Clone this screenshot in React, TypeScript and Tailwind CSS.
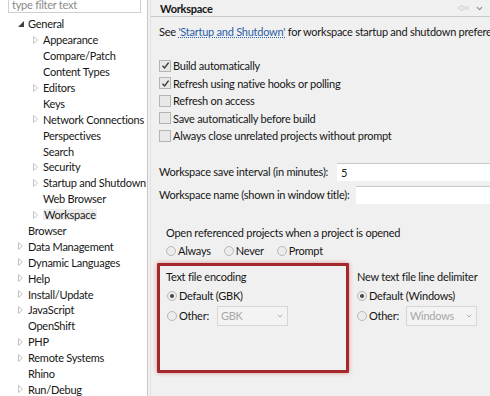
import { ChevronDown } from "lucide-react";

const tree: { label: string; depth: number; arrow?: "open" | "closed"; selected?: boolean }[] = [
  { label: "General", depth: 0, arrow: "open" },
  { label: "Appearance", depth: 1, arrow: "closed" },
  { label: "Compare/Patch", depth: 1 },
  { label: "Content Types", depth: 1 },
  { label: "Editors", depth: 1, arrow: "closed" },
  { label: "Keys", depth: 1 },
  { label: "Network Connections", depth: 1, arrow: "closed" },
  { label: "Perspectives", depth: 1 },
  { label: "Search", depth: 1 },
  { label: "Security", depth: 1, arrow: "closed" },
  { label: "Startup and Shutdown", depth: 1, arrow: "closed" },
  { label: "Web Browser", depth: 1 },
  { label: "Workspace", depth: 1, arrow: "closed", selected: true },
  { label: "Browser", depth: 0 },
  { label: "Data Management", depth: 0, arrow: "closed" },
  { label: "Dynamic Languages", depth: 0, arrow: "closed" },
  { label: "Help", depth: 0, arrow: "closed" },
  { label: "Install/Update", depth: 0, arrow: "closed" },
  { label: "JavaScript", depth: 0, arrow: "closed" },
  { label: "OpenShift", depth: 0 },
  { label: "PHP", depth: 0, arrow: "closed" },
  { label: "Remote Systems", depth: 0, arrow: "closed" },
  { label: "Rhino", depth: 0 },
  { label: "Run/Debug", depth: 0, arrow: "closed" },
];

function Arrow({ kind }: { kind?: "open" | "closed" }) {
  if (!kind) return <span className="w-[15px] shrink-0" />;
  return (
    <span className="flex w-[15px] shrink-0 items-center justify-center">
      {kind === "open" ? (
        <svg width="6" height="6" viewBox="0 0 6 6">
          <path d="M6 0 L6 6 L0 6 Z" fill="#404040" />
        </svg>
      ) : (
        <svg width="5" height="8" viewBox="0 0 5 8">
          <path d="M0.5 0.5 L4.5 4 L0.5 7.5 Z" fill="none" stroke="#c4c4c4" strokeWidth="1" />
        </svg>
      )}
    </span>
  );
}

function Checkbox({ checked, label }: { checked?: boolean; label: string }) {
  return (
    <div className="flex h-[17.5px] items-center">
      <span className="flex h-[12px] w-[12px] items-center justify-center border border-[#b4b4b4] bg-[#e8e8e8]">
        {checked && (
          <svg width="9" height="9" viewBox="0 0 9 9">
            <path d="M1.5 4.8 L3.6 7 L7.6 1.6" fill="none" stroke="#3a3a3a" strokeWidth="1.4" />
          </svg>
        )}
      </span>
      <span className="ml-[2px]">{label}</span>
    </div>
  );
}

function Radio({ checked, label, className = "" }: { checked?: boolean; label: string; className?: string }) {
  return (
    <span className={"flex items-center " + className}>
      <span className="flex h-[10px] w-[10px] items-center justify-center rounded-full border border-[#b8b8b8] bg-[#ececec]">
        {checked && <span className="h-[4px] w-[4px] rounded-full bg-[#454545]" />}
      </span>
      <span className="ml-[2px]">{label}</span>
    </span>
  );
}

function Combo({ value }: { value: string }) {
  return (
    <span className="flex h-[20px] w-[71px] items-center justify-between border border-[#d6d6d6] bg-[#f3f3f3] px-[3px] text-[#a8a8a8]">
      <span>{value}</span>
      <ChevronDown size={8} strokeWidth={3} className="text-[#b0b0b0]" />
    </span>
  );
}

export default function App() {
  return (
    <div className="flex h-[396px] w-[490px] overflow-hidden bg-[#f0f0f0] font-['Lato','Noto_Sans',sans-serif] text-[11px] leading-none tracking-[-0.25px] text-[#161616]">
      {/* left: preference tree */}
      <div className="flex w-[148px] shrink-0 flex-col border-r border-[#c9c9c9] bg-white">
        <div className="mx-[8px] mt-[-8px] flex h-[21px] w-[133px] shrink-0 items-end border border-[#cfcfcf] px-[3px] pb-[2px] text-[#8a8a8a]">
          type filter text
        </div>
        <div className="mt-[3px] flex flex-col">
          {tree.map((t) => (
            <div
              key={t.label}
              className="flex h-[15.9px] shrink-0 items-center whitespace-nowrap"
              style={{ paddingLeft: 13 + t.depth * 15 }}
            >
              <Arrow kind={t.arrow} />
              <span className={t.selected ? "bg-[#ececec] px-[1px]" : ""}>{t.label}</span>
            </div>
          ))}
        </div>
      </div>

      {/* right: workspace page */}
      <div className="ml-[2px] flex min-w-0 flex-1 flex-col border-l border-[#e2e2e2]">
        <div className="flex h-[17px] shrink-0 items-center justify-between border-b border-[#c8c8c8] pl-[9px] pr-[6px]">
          <span className="font-bold">Workspace</span>
          <span className="flex items-center gap-[6px] text-[#c4c4c4]">
            <svg width="12" height="8" viewBox="0 0 12 8">
              <path d="M1 4 L5 1 L5 3 L11 3 L11 5 L5 5 L5 7 Z" fill="none" stroke="#cfcfcf" />
            </svg>
            <ChevronDown size={9} strokeWidth={3} className="text-[#8a8a8a]" />
          </span>
        </div>
        <div className="flex flex-col pl-[8px]">
          <div className="mt-[7px] flex h-[14px] items-center whitespace-nowrap">
            See&nbsp;
            <span className="text-[#2a5fa8] underline decoration-dotted">'Startup and Shutdown'</span>
            &nbsp;for workspace startup and shutdown preferences.
          </div>

          <div className="mt-[19px] flex flex-col">
            <Checkbox checked label="Build automatically" />
            <Checkbox checked label="Refresh using native hooks or polling" />
            <Checkbox label="Refresh on access" />
            <Checkbox label="Save automatically before build" />
            <Checkbox label="Always close unrelated projects without prompt" />
          </div>

          <div className="mt-[18px] flex h-[18px] items-center whitespace-nowrap">
            <span className="w-[178px] shrink-0">Workspace save interval (in minutes):</span>
            <span className="flex h-[18px] flex-1 items-center border-t border-[#c8c8c8] bg-white pl-[4px]">5</span>
          </div>
          <div className="mt-[5px] flex h-[18px] items-center whitespace-nowrap">
            <span className="w-[197px] shrink-0">Workspace name (shown in window title):</span>
            <span className="h-[18px] flex-1 border-t border-[#c8c8c8] bg-white" />
          </div>

          <div className="mt-[21px] pl-[7px]">
            <div className="flex h-[16px] items-center">Open referenced projects when a project is opened</div>
            <div className="mt-[1px] flex h-[18px] items-center">
              <Radio label="Always" />
              <Radio label="Never" className="ml-[13px]" />
              <Radio label="Prompt" className="ml-[13px]" />
            </div>
          </div>

          <div className="ml-[-2px] mt-[3px] flex">
            <div className="flex h-[110px] w-[192px] shrink-0 flex-col rounded-[1px] border-[3px] border-[#a3282c] pl-[6px] pt-[3px] shadow-[0_0_4px_rgba(200,40,40,0.45)]">
              <div className="flex h-[16px] items-center">Text file encoding</div>
              <div className="mt-[2px] flex h-[18px] items-center pl-[1px]">
                <Radio checked label="Default (GBK)" />
              </div>
              <div className="flex h-[22px] items-center pl-[1px]">
                <Radio label="Other:" />
                <span className="ml-[8px]">
                  <Combo value="GBK" />
                </span>
              </div>
            </div>
            <div className="ml-[8px] flex min-w-0 flex-1 flex-col pt-[6px]">
              <div className="flex h-[16px] items-center whitespace-nowrap">New text file line delimiter</div>
              <div className="mt-[2px] flex h-[18px] items-center whitespace-nowrap">
                <Radio checked label="Default (Windows)" />
              </div>
              <div className="flex h-[22px] items-center">
                <Radio label="Other:" />
                <span className="ml-[7px]">
                  <Combo value="Windows" />
                </span>
              </div>
            </div>
          </div>
        </div>
      </div>
    </div>
  );
}
